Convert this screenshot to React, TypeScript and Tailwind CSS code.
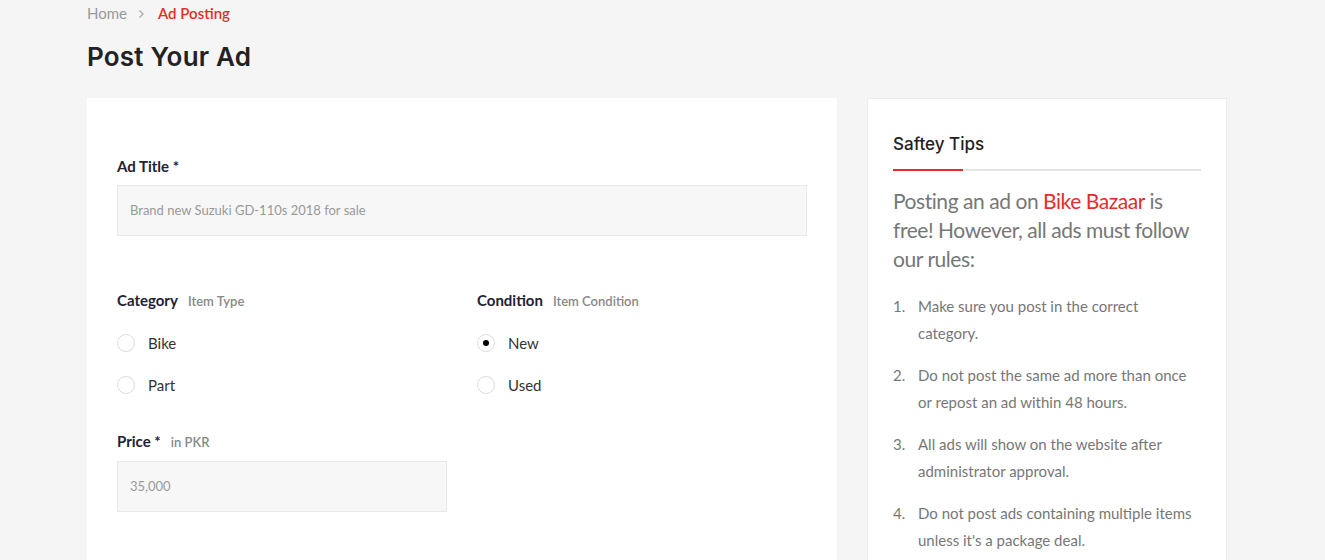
export default function App() {
  const tips = [
    "Make sure you post in the correct category.",
    "Do not post the same ad more than once or repost an ad within 48 hours.",
    "All ads will show on the website after administrator approval.",
    "Do not post ads containing multiple items unless it's a package deal.",
  ];

  const Radio = ({ label, checked }: { label: string; checked?: boolean }) => (
    <label className="flex items-center gap-[13px] h-[18px]">
      <span className="w-[18px] h-[18px] rounded-full border border-[#dcdcdc] bg-white flex items-center justify-center">
        {checked && <span className="w-[6px] h-[6px] rounded-full bg-black" />}
      </span>
      <span className="text-[15px] text-[#333]">{label}</span>
    </label>
  );

  return (
    <div className="min-h-[560px] bg-[#f5f5f5] font-['Lato',sans-serif]">
      <div className="w-[1140px] ml-[87px]">
        {/* breadcrumb */}
        <div className="flex items-center h-[27px] text-[15px]">
          <span className="text-[#999]">Home</span>
          <svg className="mx-[11px]" width="7" height="10" viewBox="0 0 7 10" fill="none">
            <path d="M1.5 1.5L5 5L1.5 8.5" stroke="#aaa" strokeWidth="1.3" />
          </svg>
          <span className="text-[#e52d27] font-semibold ml-[2px]">Ad Posting</span>
        </div>

        <h1 className="mt-[14px] text-[26px] leading-[32px] font-semibold text-[#222] font-['Inter',sans-serif] tracking-[0.2px]">
          Post Your Ad
        </h1>

        <div className="flex gap-[30px] mt-[25px]">
          {/* form card */}
          <div className="w-[750px] bg-white px-[30px] pt-[58px] pb-[40px]">
            <div className="text-[15px] font-bold text-[#1f2233] leading-[20px]">Ad Title *</div>
            <div className="mt-[9px] h-[51px] bg-[#f7f7f7] border border-[#e8e8e8] flex items-center px-[12px] text-[13px] text-[#999]">
              Brand new Suzuki GD-110s 2018 for sale
            </div>

            <div className="grid grid-cols-2 gap-[30px] mt-[54px]">
              <div>
                <div className="flex items-baseline gap-[10px] leading-[20px]">
                  <span className="text-[15px] font-bold text-[#1f2233]">Category</span>
                  <span className="text-[13px] font-semibold text-[#888]">Item Type</span>
                </div>
                <div className="mt-[23px] flex flex-col gap-[24px]">
                  <Radio label="Bike" />
                  <Radio label="Part" />
                </div>
              </div>
              <div>
                <div className="flex items-baseline gap-[10px] leading-[20px]">
                  <span className="text-[15px] font-bold text-[#1f2233]">Condition</span>
                  <span className="text-[13px] font-semibold text-[#888]">Item Condition</span>
                </div>
                <div className="mt-[23px] flex flex-col gap-[24px]">
                  <Radio label="New" checked />
                  <Radio label="Used" />
                </div>
              </div>
            </div>

            <div className="mt-[37px] flex items-baseline gap-[10px] leading-[20px]">
              <span className="text-[15px] font-bold text-[#1f2233]">Price *</span>
              <span className="text-[13px] font-semibold text-[#888]">in PKR</span>
            </div>
            <div className="mt-[9px] w-[330px] h-[51px] bg-[#f7f7f7] border border-[#e8e8e8] flex items-center px-[12px] text-[13px] text-[#999]">
              35,000
            </div>
          </div>

          {/* sidebar */}
          <div className="w-[360px] bg-white border border-[#ececec] px-[25px] pt-[34px] pb-[20px] self-start">
            <h3 className="font-['Inter',sans-serif] text-[17px] font-medium text-[#222] leading-[22px]">Saftey Tips</h3>
            <div className="mt-[14px] h-[2px] bg-[#e5e5e5]">
              <div className="w-[70px] h-[2px] bg-[#e52d27]" />
            </div>
            <p className="mt-[15px] text-[21px] leading-[29px] text-[#777] tracking-[-0.45px]">
              Posting an ad on <span className="text-[#e52d27]">Bike Bazaar</span> is free! However, all ads must follow our rules:
            </p>
            <ol className="mt-[20px] flex flex-col gap-[15px]">
              {tips.map((t, i) => (
                <li key={i} className="flex text-[15px] leading-[27px] text-[#777]">
                  <span className="w-[25px] shrink-0">{i + 1}.</span>
                  <span>{t}</span>
                </li>
              ))}
            </ol>
          </div>
        </div>
      </div>
    </div>
  );
}
